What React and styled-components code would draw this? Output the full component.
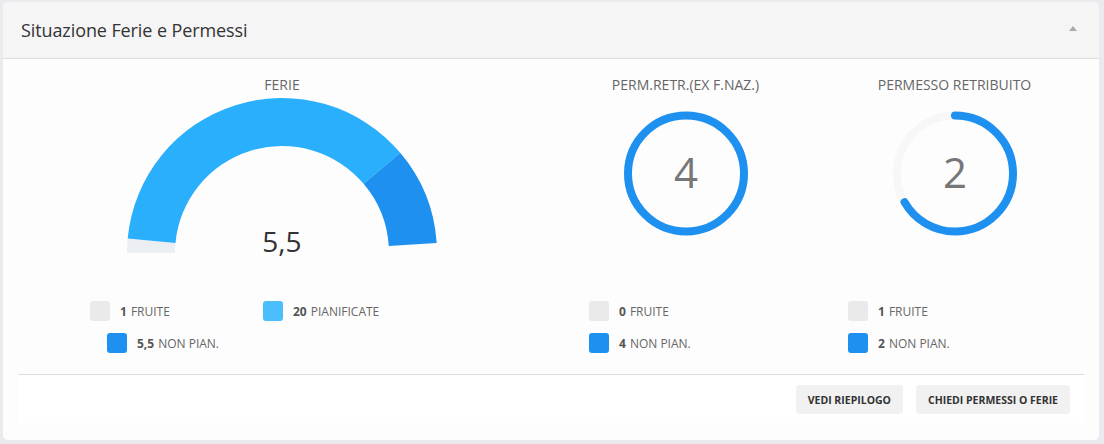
import styled, { createGlobalStyle } from "styled-components";

const GlobalStyle = createGlobalStyle`
  html, body {
    margin: 0;
    padding: 0;
    background: #ebebef;
    font-family: "Open Sans", "Liberation Sans", sans-serif;
  }
`;

const Card = styled.div`
  margin: 2px 5px 4px 3px;
  background: #fdfdfd;
  border-radius: 5px;
  overflow: hidden;
  padding-bottom: 17px;
`;

const Header = styled.div`
  height: 56px;
  display: flex;
  align-items: center;
  justify-content: space-between;
  padding: 0 22px 0 18px;
  background: #f5f5f6;
  border-bottom: 1px solid #dcdcdc;
`;

const Title = styled.h2`
  margin: 0;
  font-size: 18px;
  font-weight: 400;
  color: #333;
  letter-spacing: -0.1px;
`;

const Caret = styled.span`
  width: 0;
  height: 0;
  border-left: 4px solid transparent;
  border-right: 4px solid transparent;
  border-bottom: 5px solid #aaa;
  margin-top: -3px;
`;

const Body = styled.div`
  display: grid;
  grid-template-columns: 2fr 1fr 1fr;
  padding: 17px 10px 21px;
`;

const Column = styled.div`
  display: flex;
  flex-direction: column;
`;

const Label = styled.div`
  text-align: center;
  font-size: 14px;
  line-height: 18px;
  color: #666;
`;

const ChartBox = styled.div`
  height: 170px;
  display: flex;
  justify-content: center;
`;

const Legend = styled.div`
  margin-top: 37px;
  display: flex;
  flex-direction: column;
  gap: 12px;
`;

const LegendRow = styled.div`
  display: flex;
  padding-left: ${(p) => p.$offset}px;
`;

const Item = styled.div`
  display: flex;
  align-items: center;
  width: ${(p) => (p.$width ? `${p.$width}px` : "auto")};
  font-size: 12px;
  color: #666;
  height: 20px;
`;

const Swatch = styled.span`
  width: 20px;
  height: 20px;
  border-radius: 3px;
  background: ${(p) => p.$color};
  margin-right: 10px;
  flex-shrink: 0;
`;

const Num = styled.b`
  font-weight: 700;
  color: #555;
  margin-right: 4px;
`;

const Footer = styled.div`
  margin: 0 15px;
  border-top: 1px solid #dcdcdc;
  background: #fff;
  display: flex;
  justify-content: flex-end;
  gap: 13px;
  padding: 10px 14px 9px 0;
`;

const Button = styled.button`
  height: 29px;
  padding: 0 12px;
  border: none;
  border-radius: 3px;
  background: #f1f1f1;
  color: #333;
  font-family: "Open Sans", "Liberation Sans", sans-serif;
  font-weight: 700;
  font-size: 10.5px;
  letter-spacing: 0;
`;

const GREY = "#eaeaea";
const LIGHT = "#29affb";
const DARK = "#1e90f0";

function sector(cx, cy, r0, r1, a0, a1) {
  const rad = (a) => (a * Math.PI) / 180;
  const pt = (r, a) => [cx - r * Math.cos(rad(a)), cy - r * Math.sin(rad(a))];
  const [x1, y1] = pt(r1, a0);
  const [x2, y2] = pt(r1, a1);
  const [x3, y3] = pt(r0, a1);
  const [x4, y4] = pt(r0, a0);
  const large = a1 - a0 > 180 ? 1 : 0;
  return `M${x1} ${y1} A${r1} ${r1} 0 ${large} 1 ${x2} ${y2} L${x3} ${y3} A${r0} ${r0} 0 ${large} 0 ${x4} ${y4} Z`;
}

function Gauge() {
  const cx = 160;
  const cy = 159;
  return (
    <svg width="320" height="170" viewBox="0 0 320 170">
      <path d={sector(cx, cy, 107, 155, 0, 5.4)} fill="#ebeef3" />
      <path d={sector(cx, cy, 107, 155, 5.4, 139.7)} fill={LIGHT} />
      <path d={sector(cx, cy, 107, 155, 139.7, 176.3)} fill={DARK} />
      <text
        x={cx}
        y="158"
        textAnchor="middle"
        fontSize="28"
        fill="#333"
        fontFamily="Open Sans, Liberation Sans, sans-serif"
      >
        5,5
      </text>
    </svg>
  );
}

function Ring({ value, part }) {
  const r = 58;
  const c = 2 * Math.PI * r;
  return (
    <svg width="140" height="170" viewBox="0 0 140 170">
      <circle cx="70" cy="79.5" r={r} fill="none" stroke="#f7f7f7" strokeWidth="8" />
      <circle
        cx="70"
        cy="79.5"
        r={r}
        fill="none"
        stroke={DARK}
        strokeWidth="8"
        strokeLinecap={part < 1 ? "round" : "butt"}
        strokeDasharray={`${c * part} ${c}`}
        transform="rotate(-90 70 79.5)"
      />
      <text
        x="70"
        y="94"
        textAnchor="middle"
        fontSize="42"
        fill="#777"
        fontFamily="Open Sans, Liberation Sans, sans-serif"
      >
        {value}
      </text>
    </svg>
  );
}

export default function App() {
  return (
    <>
      <GlobalStyle />
      <Card>
        <Header>
          <Title>Situazione Ferie e Permessi</Title>
          <Caret />
        </Header>
        <Body>
          <Column>
            <Label>FERIE</Label>
            <ChartBox>
              <Gauge />
            </ChartBox>
            <Legend>
              <LegendRow $offset={77}>
                <Item $width={173}>
                  <Swatch $color={GREY} />
                  <Num>1</Num>FRUITE
                </Item>
                <Item>
                  <Swatch $color="#4bbffd" />
                  <Num>20</Num>PIANIFICATE
                </Item>
              </LegendRow>
              <LegendRow $offset={94}>
                <Item>
                  <Swatch $color={DARK} />
                  <Num>5,5</Num>NON PIAN.
                </Item>
              </LegendRow>
            </Legend>
          </Column>
          <Column>
            <Label>PERM.RETR.(EX F.NAZ.)</Label>
            <ChartBox>
              <Ring value="4" part={1} />
            </ChartBox>
            <Legend>
              <LegendRow $offset={38}>
                <Item>
                  <Swatch $color={GREY} />
                  <Num>0</Num>FRUITE
                </Item>
              </LegendRow>
              <LegendRow $offset={38}>
                <Item>
                  <Swatch $color={DARK} />
                  <Num>4</Num>NON PIAN.
                </Item>
              </LegendRow>
            </Legend>
          </Column>
          <Column>
            <Label>PERMESSO RETRIBUITO</Label>
            <ChartBox>
              <Ring value="2" part={2 / 3} />
            </ChartBox>
            <Legend>
              <LegendRow $offset={28}>
                <Item>
                  <Swatch $color={GREY} />
                  <Num>1</Num>FRUITE
                </Item>
              </LegendRow>
              <LegendRow $offset={28}>
                <Item>
                  <Swatch $color={DARK} />
                  <Num>2</Num>NON PIAN.
                </Item>
              </LegendRow>
            </Legend>
          </Column>
        </Body>
        <Footer>
          <Button>VEDI RIEPILOGO</Button>
          <Button>CHIEDI PERMESSI O FERIE</Button>
        </Footer>
      </Card>
    </>
  );
}
